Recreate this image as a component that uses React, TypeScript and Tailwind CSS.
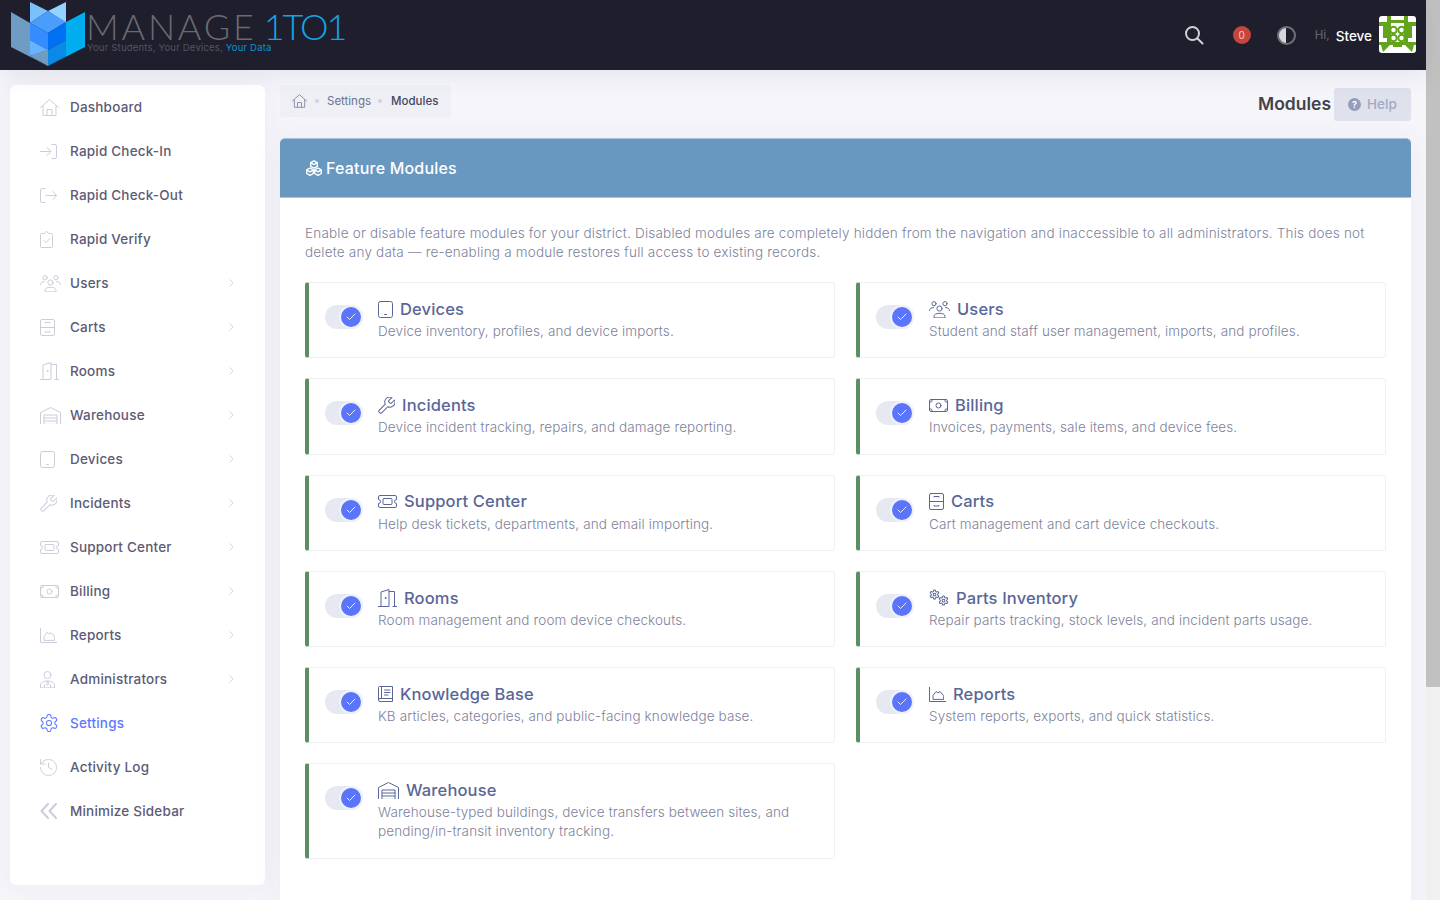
import type { ReactNode } from "react";

type IconDef = { w: number; h: number; vb?: string; sw?: number; body: ReactNode };

const WRENCH = "M14.7 6.3a1 1 0 0 0 0 1.4l1.6 1.6a1 1 0 0 0 1.4 0l3.77-3.77a6 6 0 0 1-7.94 7.94l-6.91 6.91a2.12 2.12 0 0 1-3-3l6.91-6.91a6 6 0 0 1 7.94-7.94l-3.76 3.76z";
const GEAR = "M12.22 2h-.44a2 2 0 0 0-2 2v.18a2 2 0 0 1-1 1.73l-.43.25a2 2 0 0 1-2 0l-.15-.08a2 2 0 0 0-2.73.73l-.22.38a2 2 0 0 0 .73 2.73l.15.1a2 2 0 0 1 1 1.72v.51a2 2 0 0 1-1 1.74l-.15.09a2 2 0 0 0-.73 2.73l.22.38a2 2 0 0 0 2.73.73l.15-.08a2 2 0 0 1 2 0l.43.25a2 2 0 0 1 1 1.73V20a2 2 0 0 0 2 2h.44a2 2 0 0 0 2-2v-.18a2 2 0 0 1 1-1.73l.43-.25a2 2 0 0 1 2 0l.15.08a2 2 0 0 0 2.73-.73l.22-.39a2 2 0 0 0-.73-2.73l-.15-.08a2 2 0 0 1-1-1.74v-.5a2 2 0 0 1 1-1.74l.15-.09a2 2 0 0 0 .73-2.73l-.22-.38a2 2 0 0 0-2.73-.73l-.15.08a2 2 0 0 1-2 0l-.43-.25a2 2 0 0 1-1-1.73V4a2 2 0 0 0-2-2z";

const ICONS: Record<string, IconDef> = {
  home: { w: 19, h: 17, vb: "0 0 19 17", body: <path d="M.5 8.500 9.500.5l9 8M3 7v9.500h13V7M7 16.500v-6h5v6" /> },
  login: { w: 17, h: 15, vb: "0 0 17 15", body: <path d="M.5 7.500h10M7 3.500l4 4-4 4M12 .5h3a1.500 1.500 0 0 1 1.500 1.500v11a1.500 1.500 0 0 1-1.500 1.500h-3" /> },
  logout: { w: 17, h: 15, vb: "0 0 17 15", body: <path d="M5 .5H2A1.500 1.500 0 0 0 .5 2v11A1.500 1.500 0 0 0 2 14.500h3M6 7.500h10.500M13 3.500l3.500 4-3.500 4" /> },
  clipboard: { w: 13, h: 17, vb: "0 0 13 17", body: <path d="M4 2.500H1.500a1 1 0 0 0-1 1v12a1 1 0 0 0 1 1h10a1 1 0 0 0 1-1v-12a1 1 0 0 0-1-1H9L6.500.5zM4 9.500l2 2 3.500-3.500" /> },
  users: {
    w: 21, h: 17, vb: "0 0 21 17",
    body: (
      <>
        <circle cx="10.500" cy="7.500" r="2.600" />
        <path d="M5 16.500v-1c0-2.200 2.200-3.200 5.500-3.200s5.500 1 5.500 3.200v1zM.5 9.500c.3-2 1.800-3 4-3M20.500 9.500c-.3-2-1.800-3-4-3" />
        <circle cx="5" cy="2.700" r="2.100" />
        <circle cx="16" cy="2.700" r="2.100" />
      </>
    ),
  },
  carts: { w: 15, h: 17, vb: "0 0 15 17", body: <path d="M2 .5h11A1.500 1.500 0 0 1 14.500 2v13a1.500 1.500 0 0 1-1.500 1.500H2A1.500 1.500 0 0 1 .5 15V2A1.500 1.500 0 0 1 2 .5zM.5 8.500h14M5 4V3.500h5V4M5 12.500V13h5v-.5" /> },
  rooms: { w: 19, h: 18, vb: "0 0 19 18", body: <><path d="M0 17.500h5M3 17.500V3l8-2.500v17H3M11 2.500h5.500v15M15 17.500h4" /><circle cx="7.500" cy="9" r=".5" /></> },
  warehouse: { w: 21, h: 17, vb: "0 0 21 17", body: <path d="M.5 17V5.500L10.500.5l10 5V17M4 17V8h13v9zM4 11h13M4 14h13" /> },
  tablet: { w: 15, h: 17, vb: "0 0 15 17", body: <><rect x=".5" y=".5" width="14" height="16" rx="2" /><path d="M6.500 13.500h2" /></> },
  wrench: { w: 17, h: 17, vb: "2 2 20 20", sw: 1.200, body: <path d={WRENCH} /> },
  ticket: { w: 19, h: 13, vb: "0 0 19 13", body: <><path d="M2 .5h15A1.500 1.500 0 0 1 18.500 2v2.500a2 2 0 0 0 0 4V11a1.500 1.500 0 0 1-1.500 1.500H2A1.500 1.500 0 0 1 .5 11V8.500a2 2 0 0 0 0-4V2A1.500 1.500 0 0 1 2 .5z" /><rect x="5" y="3.500" width="9" height="6" rx="1" /></> },
  billing: { w: 19, h: 13, vb: "0 0 19 13", body: <><rect x=".5" y=".5" width="18" height="12" rx="1.500" /><path d="M.5 3.500a3 3 0 0 0 3-3M15.500.5a3 3 0 0 0 3 3M18.500 9.500a3 3 0 0 0-3 3M3.500 12.500a3 3 0 0 0-3-3" /><circle cx="9.500" cy="6.500" r="2.500" /></> },
  reports: { w: 17, h: 15, vb: "0 0 17 15", body: <path d="M.5 0v14.500H17M4 12V8.500l3-4 2 1.500 2-1.500 3 3.500c.6.8.5 1.500.5 4z" /> },
  admin: { w: 15, h: 17, vb: "0 0 15 17", body: <><circle cx="7.500" cy="4" r="3.500" /><path d="M.5 16.500V14c0-2.500 3-4 7-4s7 1.500 7 4v2.500zM7.500 10.500 6.500 13l1 1.500 1-1.500zM4.500 16.500V14M10.500 16.500V14" /></> },
  settings: { w: 18, h: 18, vb: "2 1.500 20 21", sw: 1.200, body: <><path d={GEAR} /><circle cx="12" cy="12" r="3" /></> },
  history: { w: 17, h: 17, vb: "2.500 2.500 19 19", sw: 1.100, body: <path d="M3 12a9 9 0 1 0 9-9 9.750 9.750 0 0 0-6.740 2.740L3 8M3 3v5h5M12 7v5l4 2" /> },
  minimize: { w: 17, h: 16, vb: "0 0 17 16", sw: 2, body: <path d="M8 1 1.500 8 8 15M16 1 9.500 8l6.500 7" /> },
  book: { w: 15, h: 16, vb: "0 0 15 16", body: <path d="M.5 13.500V1.500a1 1 0 0 1 1-1h13v12H2a1.500 1.500 0 0 0 0 3h12.500v-3M3.500.5v12M6.500 4h5.500M6.500 6.500h5.500M6.500 9h3.500" /> },
  parts: {
    w: 20, h: 17, vb: "0 0 20 17",
    body: (
      <>
        <g transform="scale(.46)" strokeWidth="2.200"><path d={GEAR} /><circle cx="12" cy="12" r="3" /></g>
        <g transform="translate(9 6) scale(.46)" strokeWidth="2.200"><path d={GEAR} /><circle cx="12" cy="12" r="3" /></g>
      </>
    ),
  },
};

function Icon({ name, className }: { name: string; className?: string }) {
  const icon = ICONS[name];
  return (
    <svg
      width={icon.w}
      height={icon.h}
      viewBox={icon.vb}
      fill="none"
      stroke="currentColor"
      strokeWidth={icon.sw ?? 1}
      strokeLinecap="round"
      strokeLinejoin="round"
      className={`shrink-0 ${className ?? ""}`}
    >
      {icon.body}
    </svg>
  );
}

const NAV = [
  { label: "Dashboard", icon: "home" },
  { label: "Rapid Check-In", icon: "login" },
  { label: "Rapid Check-Out", icon: "logout" },
  { label: "Rapid Verify", icon: "clipboard" },
  { label: "Users", icon: "users", more: true },
  { label: "Carts", icon: "carts", more: true },
  { label: "Rooms", icon: "rooms", more: true },
  { label: "Warehouse", icon: "warehouse", more: true },
  { label: "Devices", icon: "tablet", more: true },
  { label: "Incidents", icon: "wrench", more: true },
  { label: "Support Center", icon: "ticket", more: true },
  { label: "Billing", icon: "billing", more: true },
  { label: "Reports", icon: "reports", more: true },
  { label: "Administrators", icon: "admin", more: true },
  { label: "Settings", icon: "settings", active: true },
  { label: "Activity Log", icon: "history" },
  { label: "Minimize Sidebar", icon: "minimize" },
];

const MODULES = [
  { title: "Devices", icon: "tablet", desc: "Device inventory, profiles, and device imports." },
  { title: "Users", icon: "users", desc: "Student and staff user management, imports, and profiles." },
  { title: "Incidents", icon: "wrench", desc: "Device incident tracking, repairs, and damage reporting." },
  { title: "Billing", icon: "billing", desc: "Invoices, payments, sale items, and device fees." },
  { title: "Support Center", icon: "ticket", desc: "Help desk tickets, departments, and email importing." },
  { title: "Carts", icon: "carts", desc: "Cart management and cart device checkouts." },
  { title: "Rooms", icon: "rooms", desc: "Room management and room device checkouts." },
  { title: "Parts Inventory", icon: "parts", desc: "Repair parts tracking, stock levels, and incident parts usage." },
  { title: "Knowledge Base", icon: "book", desc: "KB articles, categories, and public-facing knowledge base." },
  { title: "Reports", icon: "reports", desc: "System reports, exports, and quick statistics." },
  { title: "Warehouse", icon: "warehouse", desc: "Warehouse-typed buildings, device transfers between sites, and pending/in-transit inventory tracking." },
];

function Logo() {
  return (
    <div className="flex items-start pl-[11px] pt-[2px]">
      <svg width="76" height="66" viewBox="11 2 76 66" className="shrink-0">
        <polygon points="11,12 30,23 30,56 48,66 11,47" fill="#6f9cc3" />
        <polygon points="30,2 30,23 48,11" fill="#79c1fb" />
        <polygon points="66,2 66,23 48,11" fill="#94d2ff" />
        <polygon points="30,23 48,11 66,22 48,33" fill="#4b9dfb" />
        <polygon points="30,23 48,33 48,50 30,40" fill="#348cff" />
        <polygon points="48,33 66,22 66,40 48,50" fill="#0070f5" />
        <polygon points="66,22 85,12 85,47 48,66 66,56" fill="#00aef0" />
        <polygon points="30,40 48,50 30,56" fill="#67b3ff" />
        <polygon points="30,56 48,49 48,66" fill="#6f9cc3" />
        <polygon points="48,50 66,40 66,56 48,66" fill="#0a8ae6" />
      </svg>
      <div className="-ml-px">
        <div className="flex items-baseline h-[32px] mt-[8px] font-['Lato',sans-serif] font-light text-[36px] leading-[32px]">
          <span className="text-[#6a6a70] tracking-[2.800px]">MANAGE</span>
          <span className="text-[#12a5e6] tracking-[-2px] ml-[7px]">1TO1</span>
        </div>
        <div className="pl-px text-[9.500px] leading-[12px] text-[#55555f] tracking-[.2px] whitespace-nowrap">
          Your Students, Your Devices, <span className="text-[#0a93d0]">Your Data</span>
        </div>
      </div>
    </div>
  );
}

function Avatar() {
  return (
    <svg width="37" height="37" viewBox="0 0 37 37" className="rounded-[3px] shrink-0 -mt-px">
      <rect width="37" height="37" fill="#fff" />
      <g fill="#62a51c">
        <path d="M8 0h4v27H8zM25 0h4v27h-4zM12 4h13v3H12z" />
        <path d="M0 6h8v4H0zM29 6h8v4h-8zM4 10h4v12H4zM29 10h4v12h-4z" />
        <path d="M0 26h37v3H0zM2 29h9l-7 7zM35 29h-9l7 7zM14 29h9v2h-9z" />
      </g>
      <g fill="#fff" stroke="#62a51c" strokeWidth="2">
        <circle cx="14.500" cy="14" r="3.200" />
        <circle cx="22.500" cy="14" r="3.200" />
        <circle cx="14.500" cy="22" r="3.200" />
        <circle cx="22.500" cy="22" r="3.200" />
      </g>
    </svg>
  );
}

function Header() {
  return (
    <header className="relative z-10 h-[70px] shrink-0 bg-[#1e1e2d] flex justify-between shadow-[0_4px_24px_rgba(70,75,110,0.10)]">
      <Logo />
      <div className="flex items-center pr-[10px]">
        <svg width="20" height="20" viewBox="0 0 20 20" fill="none" stroke="#d0d1d8" strokeWidth="2" strokeLinecap="round">
          <circle cx="8.500" cy="8.500" r="6.500" />
          <path d="m13.500 13.500 5 5" />
        </svg>
        <span className="ml-[29px] w-[18px] h-[18px] rounded-full bg-[#c8453d] text-[#f3c9c5] text-[10px] flex items-center justify-center">0</span>
        <span className="ml-[26px] w-[19px] h-[19px] rounded-full border-2 border-[#6f6f78] bg-[linear-gradient(90deg,#d6d6dc_50%,#1e1e2d_50%)]" />
        <span className="ml-[19px] mt-[2px] text-[#5f5f6c] text-[11.500px] font-medium">Hi,</span>
        <span className="ml-[6px] mr-[7px] mt-[2px] text-white text-[13.500px] font-medium">Steve</span>
        <Avatar />
      </div>
    </header>
  );
}

function Sidebar() {
  return (
    <aside className="w-[255px] h-[800px] ml-[10px] mt-[15px] shrink-0 rounded-[6px] bg-white shadow-[0_0_30px_rgba(82,63,105,0.05)]">
      {NAV.map((item) => (
        <div key={item.label} className="h-[44px] flex items-center pl-[30px] pr-[31px]">
          <span className={`w-[30px] flex ${item.active ? "text-[#5d78ff]" : "text-[#cbcdd9]"}`}>
            <Icon name={item.icon} />
          </span>
          <span className={`flex-1 text-[13.500px] font-medium tracking-[.2px] ${item.active ? "text-[#5d78ff]" : "text-[#5d5b75]"}`}>
            {item.label}
          </span>
          {item.more && (
            <svg width="5" height="8" viewBox="0 0 5 8" fill="none" stroke="#d5d7e0" strokeLinecap="round" strokeLinejoin="round">
              <path d="m.7.7 3.500 3.300L.7 7.300" />
            </svg>
          )}
        </div>
      ))}
    </aside>
  );
}

function Toggle() {
  return (
    <span className="relative mt-[7px] w-[38px] h-[24px] shrink-0 rounded-full bg-[#e6e9f1]">
      <span className="absolute right-[2px] top-[2px] w-[20px] h-[20px] rounded-full bg-[#5a74fa] shadow-[0_0_0_2px_#f0f2fa] flex items-center justify-center">
        <svg width="10" height="8" viewBox="0 0 10 8" fill="none" stroke="#e8ecff" strokeLinecap="round" strokeLinejoin="round">
          <path d="m1 4 2.500 2.500L9 1" />
        </svg>
      </span>
    </span>
  );
}

function ModuleCard({ title, icon, desc }: { title: string; icon: string; desc: string }) {
  return (
    <div className="flex gap-[15px] border border-[#eff0f6] border-l-4 border-l-[#5b8f63] rounded-[3px] pl-4 pr-5 pt-[15px] pb-[16.300px]">
      <Toggle />
      <div className="min-w-0">
        <div className="flex items-center h-[24px] -mt-px mb-px gap-[7px] text-[#5a6698]">
          <Icon name={icon} />
          <span className="text-[16.500px] font-medium tracking-[.15px]">{title}</span>
        </div>
        <p className="text-[13.500px] leading-[19px] font-light text-[#7e829c] tracking-[.12px]">{desc}</p>
      </div>
    </div>
  );
}

function Main() {
  return (
    <main className="w-[1131px] ml-[15px] shrink-0">
      <div className="flex justify-between items-start pt-[15px]">
        <div className="flex items-center h-[32px] pl-[12px] pr-[13px] rounded-[4px] bg-[#eef0f5]">
          <span className="text-[#8a8ea8] flex"><svg width="15" height="14" viewBox="0 0 19 17" fill="none" stroke="currentColor" strokeWidth="1.200" strokeLinecap="round" strokeLinejoin="round"><path d="M.5 8.500 9.500.5l9 8M3 7v9.500h13V7M7 16.500v-6h5v6" /></svg></span>
          <span className="ml-[8px] w-[4px] h-[4px] rounded-full bg-[#cfd3e3]" />
          <span className="ml-[8px] mt-[2px] text-[11.500px] text-[#6c7293]">Settings</span>
          <span className="ml-[7px] w-[4px] h-[4px] rounded-full bg-[#cfd3e3]" />
          <span className="ml-[9px] mt-[2px] text-[11.500px] font-medium text-[#45475c]">Modules</span>
        </div>
        <div className="flex items-start">
          <h1 className="mt-[7px] mr-[3px] text-[17.500px] leading-[24px] font-semibold text-[#434349]">Modules</h1>
          <div className="mt-[3px] flex items-center gap-[6px] h-[33px] w-[77px] pl-[14px] rounded-[3px] bg-[#dfe2ec] text-[13.500px] font-medium text-[#a3a8c5]">
            <span className="w-[13px] h-[13px] rounded-full bg-[#969cbb] text-white text-[9px] font-bold flex items-center justify-center">?</span>
            Help
          </div>
        </div>
      </div>

      <section className="mt-[17px] rounded-t-[5px] bg-white shadow-[0_0_30px_rgba(82,63,105,0.05)]">
        <div className="h-[60px] flex items-center gap-[3px] pl-[25px] rounded-t-[5px] bg-[#6897c0] border-t border-t-[#a9c4dd] border-b border-b-[#a9c4dd] text-white">
          <svg width="18" height="16" viewBox="0 0 18 16" fill="none" stroke="white" strokeWidth="1.400" strokeLinejoin="round">
            <path d="M9 .8l3.300 1.900v3.600L9 8.200 5.700 6.300V2.700zM5 8l3.300 1.900v3.600L5 15.400l-3.300-1.900V9.900zM13 8l3.300 1.900v3.600L13 15.400l-3.300-1.900V9.900zM5.700 2.700 9 4.600l3.300-1.900M1.700 9.900 5 11.800l3.300-1.900M9.700 9.900l3.300 1.900 3.300-1.900" />
          </svg>
          <h2 className="mb-px text-[16px] font-medium tracking-[.2px]">Feature Modules</h2>
        </div>
        <div className="px-[25px] pt-[26px] pb-[80px]">
          <p className="text-[13.500px] leading-[19px] font-light text-[#7e829c] tracking-[.2px]">
            Enable or disable feature modules for your district. Disabled modules are completely hidden from the navigation and inaccessible to all administrators. This does not delete any data — re-enabling a module restores full access to existing records.
          </p>
          <div className="mt-[20px] grid grid-cols-2 gap-x-[21px] gap-y-[20px] items-start">
            {MODULES.map((m) => (
              <ModuleCard key={m.title} {...m} />
            ))}
          </div>
        </div>
      </section>
    </main>
  );
}

export default function App() {
  return (
    <div className="h-screen overflow-hidden flex bg-[#f1f1f1] font-['Inter',sans-serif]">
      <div className="w-[1426px] shrink-0 flex flex-col bg-[#f5f5fa]">
        <Header />
        <div className="flex flex-1 min-h-0">
          <Sidebar />
          <Main />
        </div>
      </div>
      <div className="w-[14px] h-[687px] shrink-0 bg-[#c1c1c1]" />
    </div>
  );
}
